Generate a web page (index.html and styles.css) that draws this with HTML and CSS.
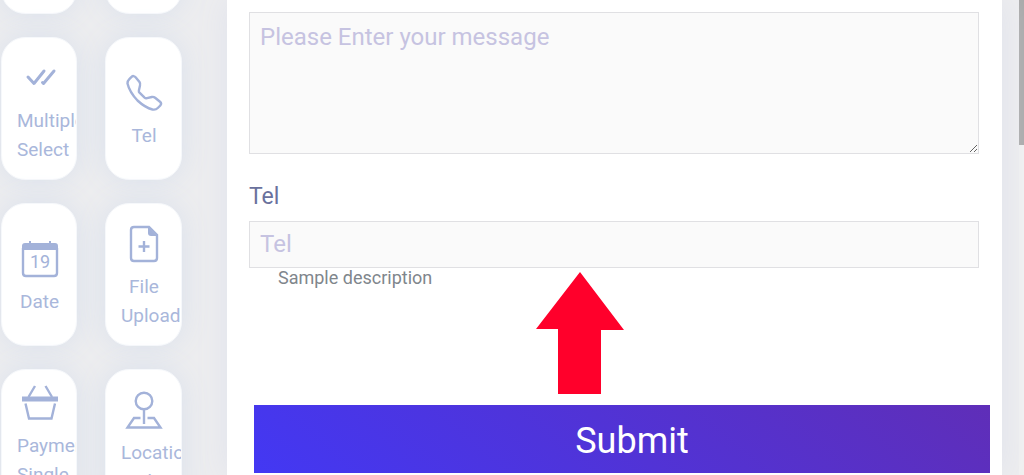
FILE: index.html
```
<!DOCTYPE html>
<html lang="en">
<head>
<meta charset="UTF-8">
<meta name="viewport" content="width=device-width, initial-scale=1.0">
<title>Form Builder</title>
<link rel="stylesheet" href="styles.css">
</head>
<body>
<div class="builder">
  <div class="fields">
    <div class="tile"></div>
    <div class="tile"></div>
    <div class="tile">
      <svg class="icon" viewBox="0 0 36 36"><path class="thick" d="M6 17l6 6.500L22 11M20.500 22.500l1 1L32 11"/></svg>
      <span>Multiple Select</span>
    </div>
    <div class="tile">
      <svg class="icon" viewBox="0 0 36 36"><path d="M1.500 8.500Q1.500 6 3.300 4.200L5.300 2.100Q7.600 0 9.600 2.200L13.500 7Q14.600 8.600 14 10.500L12.900 15.400Q12.600 16.800 13.500 17.700L18.600 22.600Q19.600 23.500 21 23.200L25.800 22Q27.600 21.600 29.100 22.800L34 26.700Q36 28.500 34.300 30.500L31.800 33Q29.600 35.200 26.500 34.500Q19 32.500 11.500 25.500Q3.500 17 1.500 8.500Z"/></svg>
      <span>Tel</span>
    </div>
    <div class="tile">
      <svg class="icon" viewBox="0 0 36 36"><path d="M1 7v25q0 3 3 3h28q3 0 3-3V7"/><path class="solid" d="M0 9V5q0-3 3-3h4V0h2v2h18V0h2v2h4q3 0 3 3v4z"/><text x="18" y="27">19</text></svg>
      <span>Date</span>
    </div>
    <div class="tile">
      <svg class="icon" viewBox="0 0 36 36"><path d="M23 1H8q-3 0-3 3v28q0 3 3 3h20q3 0 3-3V9zM18 15v11M12.500 20.500h11"/><path class="solid" d="M22 1v6q0 3 3 3h6z"/></svg>
      <span>File Upload</span>
    </div>
    <div class="tile tile-top">
      <svg class="icon" viewBox="0 0 36 36"><path d="M13 1L6.500 12M23.500 1L30 12M3.500 18.500l3.500 15h22.500L33 18.500"/><path class="solid" d="M0 11.500h36v5H0z"/></svg>
      <span>Payment Single</span>
    </div>
    <div class="tile">
      <svg class="icon" viewBox="0 0 36 36"><circle cx="18" cy="9" r="8.300"/><path d="M18 17.500V32M14.500 26H8L1.500 35.500h33L28 26h-6.500"/></svg>
      <span>Location Picker</span>
    </div>
  </div>
  <form class="preview">
    <textarea class="control message" placeholder="Please Enter your message" aria-label="Message"></textarea>
    <label for="tel">Tel</label>
    <div class="tel-field">
      <input class="control" type="tel" id="tel" placeholder="Tel">
      <svg class="arrow" viewBox="0 0 88 123"><path d="M44 0L88 58H65V122H22V57H0z"/></svg>
    </div>
    <p class="description">Sample description</p>
    <button class="submit" type="button">Submit</button>
  </form>
  <div class="scroll"><div class="thumb"></div></div>
</div>
</body>
</html>
```
FILE: styles.css
```
* { box-sizing: border-box; }
body { margin: 0; font-family: Roboto, sans-serif; background: #ededef; }
.builder { display: flex; height: 100vh; overflow: hidden; }

/* field types */
.fields {
  display: grid;
  grid-template-columns: 76px 77px;
  grid-auto-rows: 143px;
  gap: 23px 28px;
  align-content: start;
  width: 227px;
  flex-shrink: 0;
  margin-top: -129px;
  padding-left: 1px;
}
.tile {
  display: flex;
  flex-direction: column;
  align-items: center;
  justify-content: center;
  padding: 15px 14px 8px 15px;
  overflow: hidden;
  border: 1px solid #f6f8fb;
  border-radius: 24px;
  background: #fff;
  box-shadow: 0 0 30px #d9e0ec;
  color: #a9b7db;
  font-size: 19px;
  line-height: 29px;
  text-align: center;
}
.tile span { width: 100%; }
.tile-top { justify-content: flex-start; }
.icon {
  width: 36px;
  height: 36px;
  flex-shrink: 0;
  margin-bottom: 10px;
  overflow: visible;
  fill: none;
  stroke: #a3b2d9;
  stroke-width: 2.4;
}
.icon .thick { stroke-width: 3; stroke-linecap: round; stroke-linejoin: round; }
.icon .solid { fill: #a3b2d9; stroke: none; }
.icon text { fill: #a3b2d9; stroke: none; font-size: 18px; text-anchor: middle; }

/* form preview */
.preview {
  position: relative;
  flex: 1;
  padding: 12px 12px 0 22px;
  background: #fff;
  box-shadow: 0 0 30px #dfe2ec;
}
.control {
  display: block;
  width: calc(100% - 11px);
  height: 47px;
  padding: 0 10px 2px;
  border: 1px solid #e0e0e3;
  border-radius: 0;
  background: #fafafa;
  font: 24px/28px Roboto, sans-serif;
}
.control::placeholder { color: #c6c3e1; opacity: 1; }
.message { height: 142px; padding-top: 10px; }
label { display: block; margin: 29px 0 10px; color: #6a719d; font-size: 23px; line-height: 28px; }
.tel-field { position: relative; }
.arrow { position: absolute; top: 51px; left: calc(39% - 2px); width: 88px; height: 123px; fill: #ff002b; }
.description { margin: 0 0 117px 29px; color: #7f868c; font-size: 18px; line-height: 20px; }
.submit {
  display: block;
  width: calc(100% - 5px);
  height: 68px;
  margin-left: 5px;
  padding: 4px 0 0 20px;
  border: 0;
  background: linear-gradient(40deg, #4338f3, #5f2eb8);
  color: #fff;
  font: 36px/44px Roboto, sans-serif;
}

/* page scrollbar */
.scroll { width: 5px; margin-left: 17px; background: #f1f1f1; }
.thumb { height: 145px; background: #a8a8a8; }
```
